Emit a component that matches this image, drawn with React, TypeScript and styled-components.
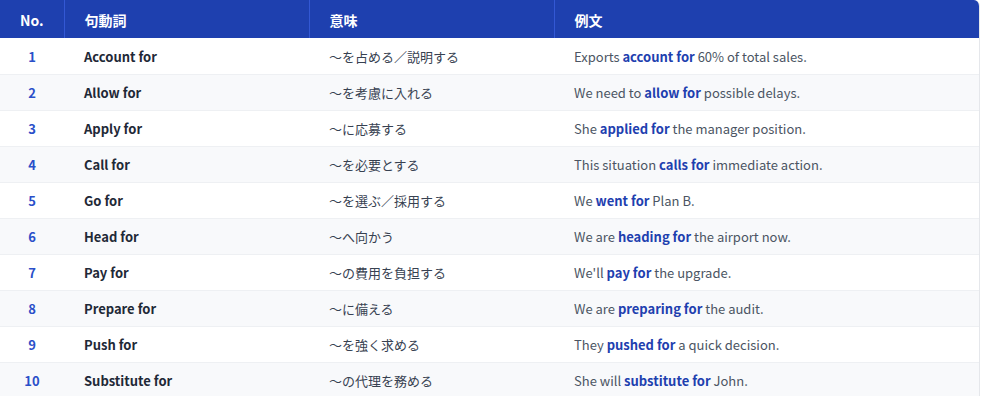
import React from "react";
import styled, { createGlobalStyle } from "styled-components";

const Global = createGlobalStyle`
  html, body { margin: 0; padding: 0; background: #ffffff; }
  body { font-family: "Noto Sans CJK JP", "Noto Sans", sans-serif; }
`;

const Wrap = styled.div`
  width: 980px;
  border-right: 1px solid #e5e7eb;
  border-top-right-radius: 6px;
  overflow: hidden;
  box-sizing: border-box;
`;

const Table = styled.table`
  width: 100%;
  border-collapse: collapse;
  table-layout: fixed;
`;

const Th = styled.th<{ $center?: boolean; $w?: number }>`
  background: #1e40af;
  color: #ffffff;
  font-size: 14px;
  font-weight: 700;
  height: 38px;
  padding: 1px 0 0 ${(p) => (p.$center ? 0 : 20)}px;
  text-align: ${(p) => (p.$center ? "center" : "left")};
  border-left: 1px solid #3358d4;
  width: ${(p) => (p.$w ? `${p.$w}px` : "auto")};
  box-sizing: border-box;
  &:first-child { border-left: none; }
`;

const Tr = styled.tr`
  height: 36px;
  background: #ffffff;
  border-top: 1px solid #eef0f3;
  &:nth-child(even) { background: #f8f9fb; }
  &:first-child { border-top: none; }
`;

const NumCell = styled.td`
  text-align: center;
  color: #2a4fc9;
  font-weight: 700;
  font-size: 13px;
  padding: 1px 0 0 0;
`;

const PhraseCell = styled.td`
  padding: 1px 0 0 20px;
  color: #1f2937;
  font-weight: 700;
  font-size: 13px;
`;

const MeaningCell = styled.td`
  padding: 1px 0 0 20px;
  color: #374151;
  font-size: 13px;
`;

const ExampleCell = styled.td`
  padding: 1px 0 0 20px;
  color: #4b5563;
  font-size: 13px;
`;

const Hl = styled.b`
  color: #1e40af;
  font-weight: 700;
`;

type Row = { phrase: string; meaning: string; pre: string; hl: string; post: string };

const rows: Row[] = [
  { phrase: "Account for", meaning: "〜を占める／説明する", pre: "Exports ", hl: "account for", post: " 60% of total sales." },
  { phrase: "Allow for", meaning: "〜を考慮に入れる", pre: "We need to ", hl: "allow for", post: " possible delays." },
  { phrase: "Apply for", meaning: "〜に応募する", pre: "She ", hl: "applied for", post: " the manager position." },
  { phrase: "Call for", meaning: "〜を必要とする", pre: "This situation ", hl: "calls for", post: " immediate action." },
  { phrase: "Go for", meaning: "〜を選ぶ／採用する", pre: "We ", hl: "went for", post: " Plan B." },
  { phrase: "Head for", meaning: "〜へ向かう", pre: "We are ", hl: "heading for", post: " the airport now." },
  { phrase: "Pay for", meaning: "〜の費用を負担する", pre: "We'll ", hl: "pay for", post: " the upgrade." },
  { phrase: "Prepare for", meaning: "〜に備える", pre: "We are ", hl: "preparing for", post: " the audit." },
  { phrase: "Push for", meaning: "〜を強く求める", pre: "They ", hl: "pushed for", post: " a quick decision." },
  { phrase: "Substitute for", meaning: "〜の代理を務める", pre: "She will ", hl: "substitute for", post: " John." },
];

export default function App() {
  return (
    <>
      <Global />
      <Wrap>
        <Table>
          <thead>
            <tr>
              <Th $center $w={64}>No.</Th>
              <Th $w={245}>句動詞</Th>
              <Th $w={245}>意味</Th>
              <Th>例文</Th>
            </tr>
          </thead>
          <tbody>
            {rows.map((r, i) => (
              <Tr key={i}>
                <NumCell>{i + 1}</NumCell>
                <PhraseCell>{r.phrase}</PhraseCell>
                <MeaningCell>{r.meaning}</MeaningCell>
                <ExampleCell>
                  {r.pre}
                  <Hl>{r.hl}</Hl>
                  {r.post}
                </ExampleCell>
              </Tr>
            ))}
          </tbody>
        </Table>
      </Wrap>
    </>
  );
}
